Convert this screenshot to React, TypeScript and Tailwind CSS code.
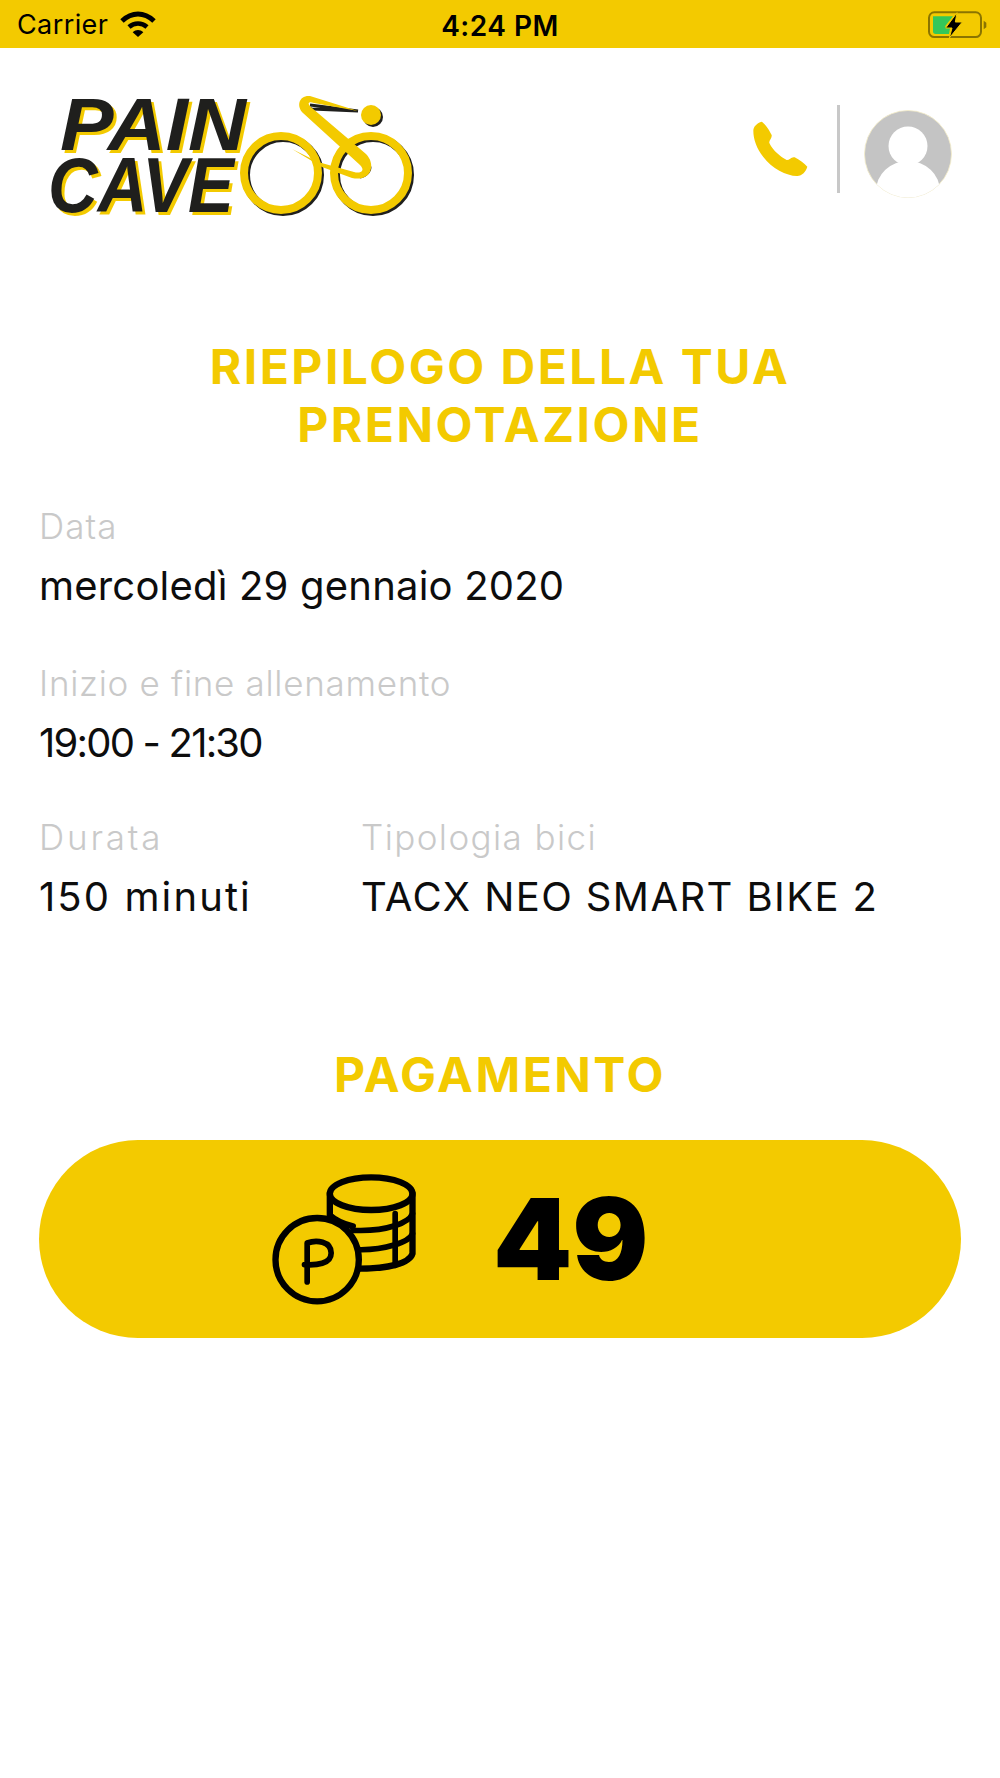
const YELLOW = "#f3ca00";

function Wifi() {
  return (
    <svg width="38" height="26" viewBox="362 32 108 78" fill="none" stroke="#000">
      <path d="M368 62 C 398 34, 434 34, 464 62" strokeWidth="15" />
      <path d="M389 80 C 405 66, 427 66, 443 80" strokeWidth="14" />
      <path d="M400 96 L416 110 L432 96 C 422 87, 410 87, 400 96 Z" fill="#000" stroke="none" />
    </svg>
  );
}

function Battery() {
  return (
    <svg width="60" height="28" viewBox="682 28 180 84" fill="none">
      <rect x="688" y="35" width="156" height="74" rx="16" stroke="#8a7400" strokeWidth="6" />
      <path d="M852 60 L860 66 V80 L852 86 Z" fill="#8a7400" />
      <path d="M700 47 H760 L735 78 H752 L748 100 H708 Q700 100 700 92 Z" fill="#34c759" />
      <path d="M772 36 L738 82 H757 L749 112 L788 64 H767 Z" fill="#000" stroke={YELLOW} strokeWidth="3" />
    </svg>
  );
}

function Logo() {
  const letters = {
    fontFamily: "'Liberation Sans', sans-serif",
    fontWeight: 700,
    fontStyle: "italic",
    filter: "drop-shadow(3px 3px 0 #f3ca00)",
  } as const;
  return (
    <svg width="366" height="130" viewBox="47 90 366 130" fill="none" className="overflow-visible">
      <text x="60" y="150" fontSize="74" textLength="186" lengthAdjust="spacingAndGlyphs" fill="#1f1f1d" style={letters}>PAIN</text>
      <text x="48" y="212" fontSize="78" textLength="186" lengthAdjust="spacingAndGlyphs" fill="#1f1f1d" style={letters}>CAVE</text>
      {/* bike */}
      <circle cx="283" cy="175" r="37" stroke="#1f1f1d" strokeWidth="8" />
      <circle cx="373" cy="175" r="37" stroke="#1f1f1d" strokeWidth="8" />
      <circle cx="281" cy="173" r="37" stroke={YELLOW} strokeWidth="8" />
      <circle cx="371" cy="173" r="37" stroke={YELLOW} strokeWidth="8" />
      <path d="M310 105 L358 111 L312 109 C 305 108, 306 113, 310 116 L369 165 C 372 170, 366 176, 360 177" stroke="#1f1f1d" strokeWidth="3" />
      <path d="M358 111 L310 96 C 299 95, 296 106, 303 113 L360 165 C 366 171, 360 174, 354 172 L318 162 L292 149 L322 167 L352 178 C 372 182, 376 164, 366 154 L312 108 C 306 103, 309 101, 314 103 Z" fill={YELLOW} />
      <circle cx="373" cy="117" r="10" fill="#1f1f1d" />
      <circle cx="371" cy="115" r="10" fill={YELLOW} />
    </svg>
  );
}

function PhoneIcon() {
  return (
    <svg width="60" height="60" viewBox="150 360 180 180">
      <path
        d="M160 395 C 160 382, 172 372, 185 368 C 195 374, 208 392, 215 408 C 217 418, 206 424, 208 432 C 220 456, 240 472, 260 483 C 268 484, 274 472, 284 475 C 298 482, 312 492, 322 503 C 318 518, 306 530, 292 531 C 262 532, 215 508, 190 474 C 170 448, 160 420, 160 395 Z"
        fill={YELLOW}
      />
    </svg>
  );
}

function Avatar() {
  return (
    <svg width="90" height="90" viewBox="0 0 90 90">
      <defs>
        <clipPath id="avatar-clip">
          <circle cx="45" cy="45" r="43.5" />
        </clipPath>
      </defs>
      <circle cx="45" cy="45" r="43.5" fill="#c4c4c4" stroke="#f5edc8" strokeWidth="0.8" />
      <g clipPath="url(#avatar-clip)" fill="#fff">
        <circle cx="45" cy="37" r="19.5" />
        <ellipse cx="45" cy="82" rx="32" ry="30" />
      </g>
    </svg>
  );
}

function Coins() {
  return (
    <svg width="147" height="135" viewBox="90 65 440 405" fill="none" stroke="#000" strokeWidth="19" strokeLinecap="round" strokeLinejoin="round">
      <ellipse cx="390" cy="130" rx="124" ry="49" />
      <path d="M266 130 V195 C 285 212, 310 222, 335 228" />
      <path d="M514 130 V310 C 505 340, 440 355, 355 355" />
      <path d="M514 190 C 505 215, 440 245, 335 240" strokeWidth="17" />
      <path d="M514 250 C 505 275, 430 300, 350 298" strokeWidth="17" />
      <path d="M462 190 V345" strokeWidth="17" />
      <circle cx="228" cy="328" r="125" fill={YELLOW} />
      <path d="M198 395 V278 C 225 268, 270 272, 270 308 C 270 342, 225 345, 190 343" strokeWidth="17" />
    </svg>
  );
}

function Field({
  label,
  value,
  labelClass,
  valueClass,
  className,
}: {
  label: string;
  value: string;
  labelClass: string;
  valueClass: string;
  className?: string;
}) {
  return (
    <div className={className}>
      <div className={`text-[35px] leading-[44px] font-light text-[#c9c9c9] ${labelClass}`}>{label}</div>
      <div className={`mt-[16px] text-[40px] leading-[44px] text-[#0d0d0d] ${valueClass}`}>{value}</div>
    </div>
  );
}

export default function App() {
  return (
    <div className="min-h-[1778px] bg-white font-['Inter',sans-serif]">
      <div className="relative flex h-[48px] items-center bg-[#f3ca00] pl-[17px] pr-[13px]">
        <span className="text-[27px] leading-none tracking-[0.4px] text-black">Carrier</span>
        <span className="ml-[11px]"><Wifi /></span>
        <span className="absolute left-0 right-0 top-[12px] text-center text-[28px] font-semibold leading-none tracking-[0.5px] text-black">4:24 PM</span>
        <span className="ml-auto"><Battery /></span>
      </div>

      <header className="flex items-start justify-between pl-[47px] pr-[47px] pt-[42px]">
        <Logo />
        <div className="flex items-start pt-[15px]">
          <div className="pt-[14px]"><PhoneIcon /></div>
          <div className="ml-[27px] h-[88px] w-[3px] bg-[#c8c8c8]" />
          <div className="ml-[23px] pt-[4px]"><Avatar /></div>
        </div>
      </header>

      <h1 className="mt-[118px] text-center text-[48px] font-bold leading-[58px] tracking-[2.5px] text-[#f3ca00]">
        RIEPILOGO DELLA TUA
        <br />
        PRENOTAZIONE
      </h1>

      <div className="mt-[50px] flex flex-col pl-[39px]">
        <Field label="Data" value="mercoledì 29 gennaio 2020" labelClass="tracking-[1.1px]" valueClass="tracking-[0.2px]" />
        <Field
          label="Inizio e fine allenamento"
          value="19:00 - 21:30"
          labelClass="tracking-[0.7px]"
          valueClass="tracking-[-1.8px]"
          className="mt-[53px]"
        />
        <div className="mt-[50px] flex">
          <Field label="Durata" value="150 minuti" labelClass="tracking-[2.8px]" valueClass="tracking-[2.1px]" className="w-[322px]" />
          <Field label="Tipologia bici" value="TACX NEO SMART BIKE 2" labelClass="tracking-[1.4px]" valueClass="tracking-[1.4px]" />
        </div>
      </div>

      <h2 className="mt-[127px] text-center text-[48px] font-bold leading-[58px] tracking-[2.5px] text-[#f3ca00]">PAGAMENTO</h2>

      <div className="mx-[39px] mt-[36px] flex h-[198px] items-center rounded-[99px] bg-[#f3ca00] pl-[232px]">
        <Coins />
        <span className="ml-[75px] text-[113px] font-black leading-none text-black">49</span>
      </div>
    </div>
  );
}
